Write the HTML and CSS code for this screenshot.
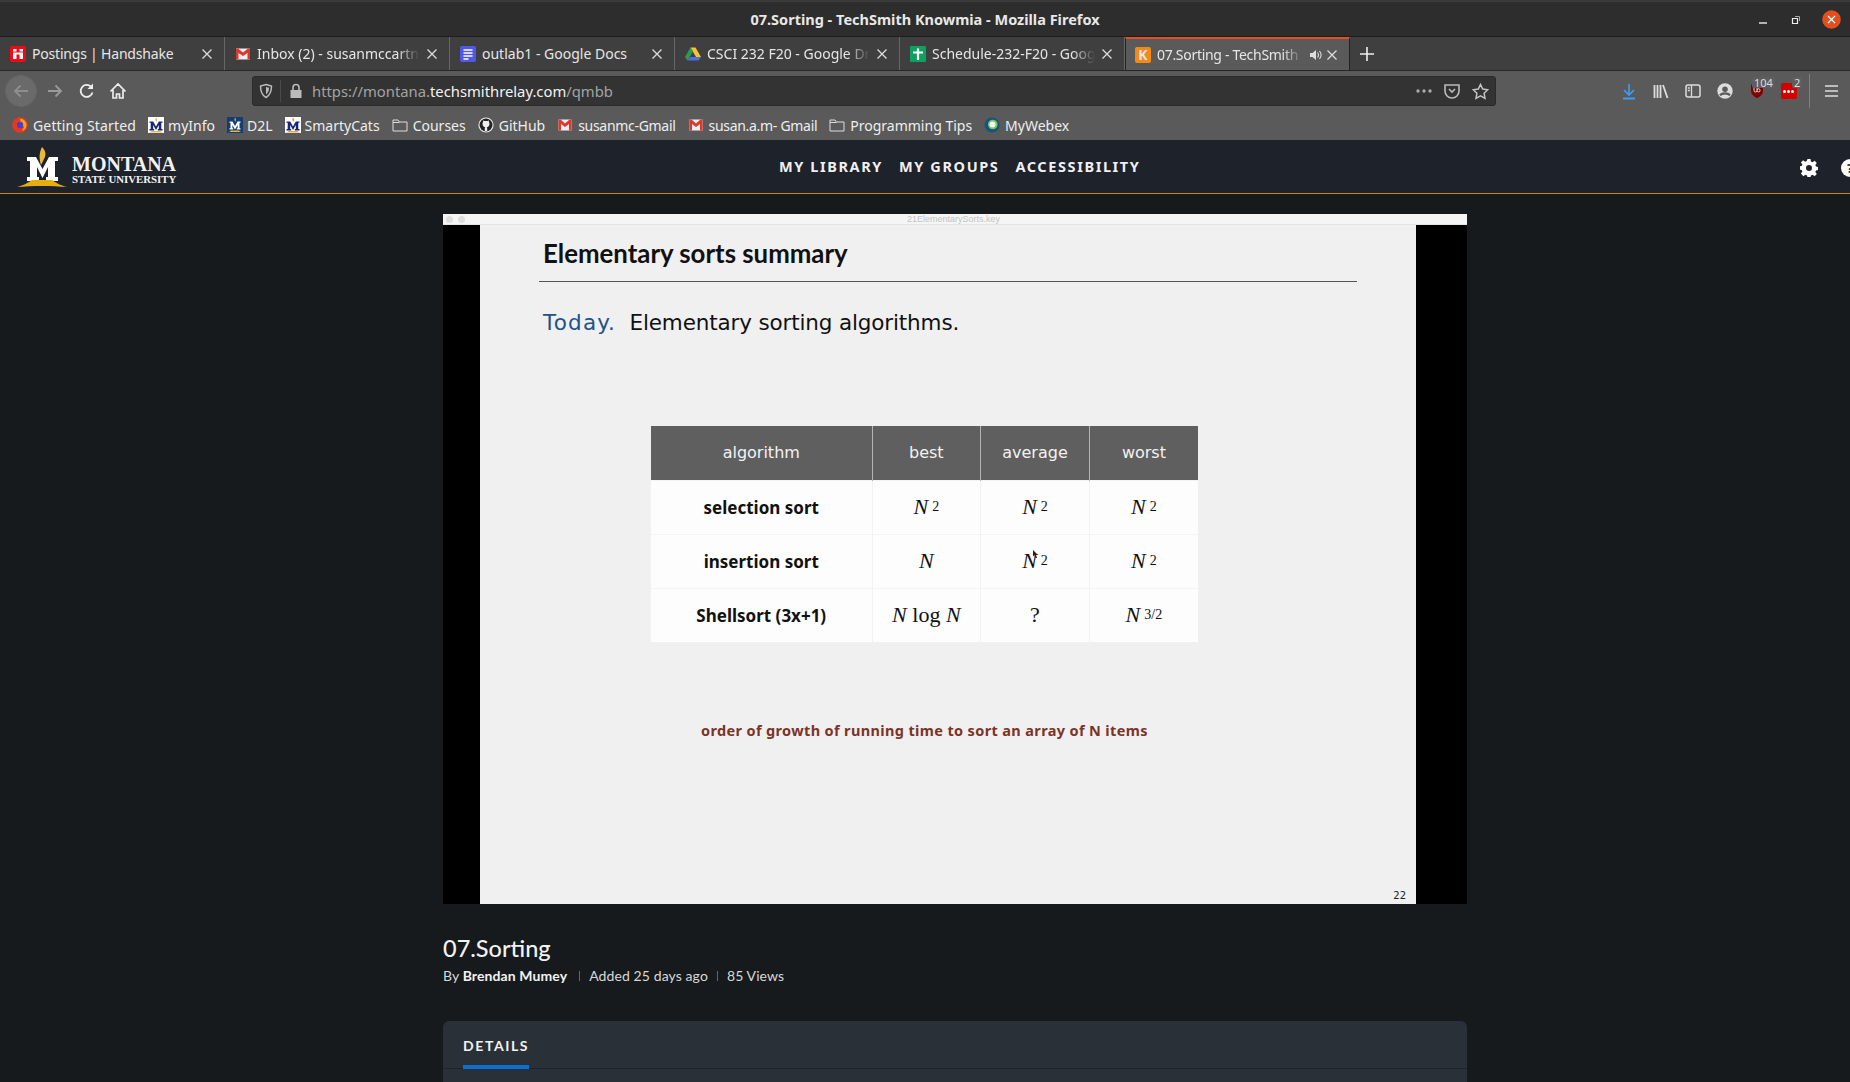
FILE: index.html
```html
<!DOCTYPE html>
<html lang="en">
<head>
    <meta charset="UTF-8">
    <meta name="viewport" content="width=device-width, initial-scale=1.0">
    <title>07.Sorting - TechSmith Knowmia</title>
    <link rel="stylesheet" href="styles.css">
</head>
<body>
    <!-- Window title -->
    <div class="titlebar">
        <span class="window-title">07.Sorting - TechSmith Knowmia - Mozilla Firefox</span>
        <div class="window-buttons">
            <svg class="win-min" width="10" height="10" viewBox="0 0 10 10"><path d="M1 8h8" stroke="#eee" stroke-width="1.4"/></svg>
            <svg class="win-max" width="10" height="10" viewBox="0 0 10 10"><path d="M1.5 3.5h5v5h-5z" fill="none" stroke="#eee" stroke-width="1.2"/><path d="M4 1.5h4.500v4.500" fill="none" stroke="#aaa"/></svg>
            <svg class="win-close" width="19" height="19" viewBox="0 0 19 19"><circle cx="9.500" cy="9.500" r="9.300" fill="#e4501c"/><path d="M6 6l7 7M13 6l-7 7" stroke="#fff" stroke-width="1.200"/></svg>
        </div>
    </div>

    <!-- Tabs -->
    <div class="tabstrip">
        <div class="tab">
            <svg class="favicon" viewBox="0 0 16 16"><rect width="16" height="16" rx="2" fill="#f00a16"/><path d="M3 3h3.500v2.500H3zM9.500 3H13v2.500H9.500zM3 6.500h10v2H3zM3 8.500h3.500V13H3zM9.500 8.500H13V13H9.500z" fill="#fff"/></svg>
            <span class="tab-label tab-label-snug">Postings | Handshake</span>
            <svg class="tab-close" width="12" height="12" viewBox="0 0 12 12"><path d="M1.500 1.500l9 9M10.500 1.500l-9 9" stroke="#ddd" stroke-width="1.300"/></svg>
        </div>
        <div class="tab">
            <svg class="favicon" viewBox="0 0 16 16"><rect x="1" y="2.500" width="14" height="11" fill="#eee"/><path d="M1 2.500h2l5 4 5-4h2v11h-2.500V7L8 10 3.500 7v6.500H1z" fill="#d93a2b"/></svg>
            <span class="tab-label tab-fade">Inbox (2) - susanmccartn</span>
            <svg class="tab-close" width="12" height="12" viewBox="0 0 12 12"><path d="M1.500 1.500l9 9M10.500 1.500l-9 9" stroke="#ddd" stroke-width="1.300"/></svg>
        </div>
        <div class="tab">
            <svg class="favicon" viewBox="0 0 16 16"><rect width="16" height="16" rx="2" fill="#5158e8"/><path d="M3.500 4h9M3.500 7h9M3.500 10h9M3.500 13h5" stroke="#fff" stroke-width="1.500"/></svg>
            <span class="tab-label">outlab1 - Google Docs</span>
            <svg class="tab-close" width="12" height="12" viewBox="0 0 12 12"><path d="M1.500 1.500l9 9M10.500 1.500l-9 9" stroke="#ddd" stroke-width="1.300"/></svg>
        </div>
        <div class="tab">
            <svg class="favicon" viewBox="0 0 16 16"><path d="M5.500 1.500h5L16 11h-5z" fill="#f6c42c"/><path d="M5.500 1.500L0 11l2.500 3.500L8 5.500z" fill="#2a9d50"/><path d="M2.500 14.500h11L16 11H5z" fill="#4d6de0"/></svg>
            <span class="tab-label tab-fade">CSCI 232 F20 - Google Dr</span>
            <svg class="tab-close" width="12" height="12" viewBox="0 0 12 12"><path d="M1.500 1.500l9 9M10.500 1.500l-9 9" stroke="#ddd" stroke-width="1.300"/></svg>
        </div>
        <div class="tab">
            <svg class="favicon" viewBox="0 0 16 16"><rect width="16" height="16" rx="1" fill="#0da05e"/><path d="M3 6.500h10M8 2.500V14" stroke="#fff" stroke-width="2.200"/></svg>
            <span class="tab-label tab-fade">Schedule-232-F20 - Goog</span>
            <svg class="tab-close" width="12" height="12" viewBox="0 0 12 12"><path d="M1.500 1.500l9 9M10.500 1.500l-9 9" stroke="#ddd" stroke-width="1.300"/></svg>
        </div>
        <div class="tab tab-active">
            <span class="favicon knowmia">K</span>
            <span class="tab-label tab-fade tab-label-tight">07.Sorting - TechSmith</span>
            <svg class="tab-sound" width="14" height="14" viewBox="0 0 14 14"><path d="M1 5h2.500L7 2v10L3.500 9H1z" fill="#ddd"/><path d="M8.500 4.500c1.200 1.500 1.200 3.500 0 5M10.500 3c2 2.500 2 5.500 0 8" fill="none" stroke="#ddd" stroke-width="1.100"/></svg>
            <svg class="tab-close" width="12" height="12" viewBox="0 0 12 12"><path d="M1.500 1.500l9 9M10.500 1.500l-9 9" stroke="#ddd" stroke-width="1.300"/></svg>
        </div>
        <svg class="new-tab" width="14" height="14" viewBox="0 0 14 14"><path d="M7 0v14M0 7h14" stroke="#eee" stroke-width="1.600"/></svg>
    </div>

    <!-- Toolbar -->
    <div class="toolbar">
        <div class="nav-buttons">
            <div class="back-btn">
                <svg width="18" height="18" viewBox="0 0 18 18"><path d="M16 9H3M8.500 3.500L3 9l5.500 5.500" fill="none" stroke="#8e8e8e" stroke-width="1.800"/></svg>
            </div>
            <svg class="nav-icon" width="18" height="18" viewBox="0 0 18 18"><path d="M2 9h13M9.500 3.500L15 9l-5.500 5.500" fill="none" stroke="#9a9a9a" stroke-width="1.800"/></svg>
            <svg class="nav-icon" width="18" height="18" viewBox="0 0 18 18"><path d="M14.500 10.500A6 6 0 1 1 13 4.700" fill="none" stroke="#eee" stroke-width="1.800"/><path d="M15 1.500v5.500H9.500z" fill="#eee"/></svg>
            <svg class="nav-icon" width="18" height="18" viewBox="0 0 18 18"><path d="M1.500 9.500L9 2l7.500 7.500M4 8v8h3.500v-4h3v4H14V8" fill="none" stroke="#eee" stroke-width="1.700"/></svg>
        </div>
        <div class="urlbar">
            <svg class="url-shield" width="16" height="16" viewBox="0 0 16 16"><path d="M8 1.500l5.500 1.500c0 5-1 9-5.500 11.500C3.500 12 2.500 8 2.500 3z" fill="none" stroke="#bbb" stroke-width="1.500"/><path d="M8 4l3 .8c0 3-.7 5-3 6.700z" fill="#bbb"/></svg>
            <span class="url-divider"></span>
            <svg class="url-lock" width="14" height="16" viewBox="0 0 14 16"><path d="M1.500 7h11v8h-11z" fill="#bbb"/><path d="M4 7V4.500a3 3 0 0 1 6 0V7" fill="none" stroke="#bbb" stroke-width="1.600"/></svg>
            <span class="url-text">https://montana.<b>techsmithrelay.com</b>/qmbb</span>
            <div class="url-actions">
                <svg width="16" height="4" viewBox="0 0 16 4"><circle cx="2" cy="2" r="1.700" fill="#aaa"/><circle cx="8" cy="2" r="1.700" fill="#aaa"/><circle cx="14" cy="2" r="1.700" fill="#aaa"/></svg>
                <svg width="16" height="16" viewBox="0 0 16 16"><path d="M1 2h14v6a7 7 0 0 1-14 0z" fill="none" stroke="#bbb" stroke-width="1.600"/><path d="M5 6l3 3 3-3" fill="none" stroke="#bbb" stroke-width="1.600"/></svg>
                <svg width="17" height="17" viewBox="0 0 17 17"><path d="M8.500 1.500l2.200 4.600 5 .7-3.600 3.500.9 5-4.500-2.400L4 15.300l.9-5L1.300 6.800l5-.7z" fill="none" stroke="#c4c4c4" stroke-width="1.500"/></svg>
            </div>
        </div>
        <div class="tool-icons">
            <svg width="16" height="17" viewBox="0 0 16 17"><path d="M8 1v10M3 7l5 5 5-5" fill="none" stroke="#3d9bf0" stroke-width="1.700"/><path d="M2 15.500h12" stroke="#3d9bf0" stroke-width="2"/></svg>
            <svg width="16" height="15" viewBox="0 0 16 15"><path d="M1.500 1v13M4.500 1v13M7.500 1v13M10 1l4.500 13" stroke="#ddd" stroke-width="1.800" fill="none"/></svg>
            <svg width="16" height="14" viewBox="0 0 16 14"><rect x="1" y="1" width="14" height="12" rx="2" fill="none" stroke="#ddd" stroke-width="1.500"/><path d="M6.500 1v12M2.800 4h2M2.800 6.500h2" stroke="#ddd" stroke-width="1.300"/></svg>
            <svg width="16" height="16" viewBox="0 0 15 15"><circle cx="7.500" cy="7.500" r="7.200" fill="#ddd"/><circle cx="7.500" cy="5.800" r="2.600" fill="#5a5a5a"/><path d="M2.800 11.500c2-2.400 7.400-2.400 9.400 0" fill="none" stroke="#5a5a5a" stroke-width="2"/></svg>
            <div class="addon">
                <svg width="14" height="16" viewBox="0 0 14 16"><path d="M1 1.500h12v6c0 3.500-2.500 6-6 7.500-3.500-1.500-6-4-6-7.500z" fill="#800000"/><path d="M4 4v3.500a1.500 1.500 0 0 0 3 0M7 4v3.500a1.500 1.500 0 0 0 3 0A1.500 1.500 0 0 0 7 7" fill="none" stroke="#ddd"/></svg>
                <span class="addon-badge">104</span>
            </div>
            <div class="addon">
                <span class="lastpass"><i></i><i></i><i></i></span>
                <span class="addon-badge">2</span>
            </div>
            <span class="tool-divider"></span>
            <svg width="13" height="12" viewBox="0 0 13 12"><path d="M0 1h13M0 6h13M0 11h13" stroke="#ddd" stroke-width="1.600"/></svg>
        </div>
    </div>

    <!-- Bookmarks -->
    <div class="bookmarks">
        <a class="bookmark bookmark-wide">
            <svg class="favicon" viewBox="0 0 16 16"><circle cx="8" cy="8" r="7.800" fill="#e8371f"/><path d="M8 1.500a6.500 6.500 0 0 1 6.500 6.500c0 3-2 5.500-4.500 6l2-4-3-3z" fill="#f7a01c"/><circle cx="8" cy="8" r="3.200" fill="#4a3fc5"/></svg>
            Getting Started
        </a>
        <a class="bookmark">
            <svg class="favicon msu-icon" viewBox="0 0 16 16"><rect width="16" height="16" fill="#fff"/><path d="M8 .5c1 1.200 1.200 2.500.3 4.500C7.400 3.500 7.200 2 8 .5z" fill="#e8a33a"/><path d="M1.500 4.500h3.700L8 9.500l2.800-5h3.700v1.300h-1.200v6.200h1.200V13.500H9.800V12h1V8L8 13 5.200 8v4h1v1.500H1.500V12h1.200V5.800H1.500z" fill="#1a2578"/><path d="M0 15.500c2-.2 3-.7 3.500-1.500h9c.5.800 1.500 1.300 3.500 1.500z" fill="#e8b93a"/></svg>
            myInfo
        </a>
        <a class="bookmark">
            <svg class="favicon msu-icon" viewBox="0 0 16 16"><rect width="16" height="16" fill="#123c72"/><path d="M8 .5c1 1.200 1.200 2.500.3 4.500C7.400 3.500 7.200 2 8 .5z" fill="#e8b93a"/><path d="M2.500 4.500h3L8 9l2.500-4.500h3v1.200h-1v5.600h1v1.200H9.800v-1.200h.8V8L8 12.500 5.400 8v3.300h.8v1.200H2.500v-1.200h1V5.700h-1z" fill="#fff"/><path d="M1 15c2-.2 2.500-.7 3-1.500h8c.5.800 1 1.300 3 1.500z" fill="#e8b93a"/></svg>
            D2L
        </a>
        <a class="bookmark">
            <svg class="favicon msu-icon" viewBox="0 0 16 16"><rect width="16" height="16" fill="#fff"/><path d="M8 .5c1 1.200 1.200 2.500.3 4.500C7.400 3.500 7.200 2 8 .5z" fill="#e8722a"/><path d="M1.500 4.500h3.700L8 9.500l2.800-5h3.700v1.300h-1.200v6.200h1.200V13.500H9.800V12h1V8L8 13 5.200 8v4h1v1.500H1.500V12h1.200V5.800H1.500z" fill="#1a2578"/><path d="M0 15.500c2-.2 3-.7 3.500-1.500h9c.5.800 1.500 1.300 3.500 1.500z" fill="#e8a33a"/></svg>
            SmartyCats
        </a>
        <a class="bookmark">
            <svg class="favicon" viewBox="0 0 16 16"><path d="M1 3h5l1.500 2H15v9H1zM1 5.500h6.500" fill="none" stroke="#ddd"/></svg>
            Courses
        </a>
        <a class="bookmark">
            <svg class="favicon" viewBox="0 0 16 16"><circle cx="8" cy="8" r="7.600" fill="#eee"/><circle cx="8" cy="8" r="6.500" fill="#222"/><path d="M4.500 7c0-1 .2-1.500.6-2l-.1-1.500 1.500.6c1-.3 2-.3 3 0l1.500-.6-.1 1.500c.4.500.6 1 .6 2 0 2-1.300 3-2.800 3.200.4.300.5.800.5 1.300V14H6.800v-2.500C6.800 11 7 10.500 7.300 10.200 5.800 10 4.500 9 4.500 7z" fill="#eee"/></svg>
            GitHub
        </a>
        <a class="bookmark bookmark-tight">
            <svg class="favicon" viewBox="0 0 16 16"><rect x="1.500" y="2.500" width="13" height="11" fill="#eee"/><path d="M1.500 2.500h2L8 6.500l4.500-4h2v11h-2.500V7L8 10 4 7v6.500H1.500z" fill="#d93a2b"/></svg>
            susanmc-Gmail
        </a>
        <a class="bookmark bookmark-tight">
            <svg class="favicon" viewBox="0 0 16 16"><rect x="1.500" y="2.500" width="13" height="11" fill="#eee"/><path d="M1.500 2.500h2L8 6.500l4.500-4h2v11h-2.500V7L8 10 4 7v6.500H1.500z" fill="#d93a2b"/></svg>
            susan.a.m- Gmail
        </a>
        <a class="bookmark">
            <svg class="favicon" viewBox="0 0 16 16"><path d="M1 3h5l1.500 2H15v9H1zM1 5.500h6.500" fill="none" stroke="#ddd"/></svg>
            Programming Tips
        </a>
        <a class="bookmark">
            <svg class="favicon" viewBox="0 0 16 16"><circle cx="8" cy="8" r="7.500" fill="#14547e"/><circle cx="8.800" cy="7.500" r="4.800" fill="#7cc65a"/><circle cx="8.500" cy="7.500" r="3" fill="#eef4ee"/></svg>
            MyWebex
        </a>
    </div>

    <!-- Site header -->
    <header class="site-header">
        <a class="logo">
            <svg class="logo-mark" width="50" height="40" viewBox="0 0 50 40">
                <path d="M25 0C28 3 30 7 27 12L24 18C22 12 22 6 25 0z" fill="#e8b93a"/>
                <path d="M10 10H19L25.500 22 32 10H41V14H38V30H41V34H29V30H31V20L25.500 31 20 20V30H22V34H10V30H13V14H10z" fill="#fff"/>
                <path d="M0 40C8 38 12 35 15 33H35C38 35 42 38 50 40 35 38.500 15 38.500 0 40z" fill="#e6ae10"/>
            </svg>
            <span class="logo-text">
                <span class="logo-name">MONTANA</span>
                <span class="logo-sub">STATE UNIVERSITY</span>
            </span>
        </a>
        <nav class="site-nav">
            <a>MY LIBRARY</a>
            <a>MY GROUPS</a>
            <a>ACCESSIBILITY</a>
        </nav>
        <div class="header-icons">
            <svg width="18" height="18" viewBox="0 0 18 18"><path d="M7.500 0h3l.4 2.500 1.700.7 2-1.500 2.200 2.200-1.500 2 .7 1.700 2.500.4v3l-2.500.4-.7 1.700 1.500 2-2.200 2.200-2-1.500-1.700.7-.4 2.500h-3l-.4-2.500-1.700-.7-2 1.500L.9 14.600l1.500-2-.7-1.700L-.8 10.500v-3l2.500-.4.7-1.700-1.500-2L3.100 1.200l2 1.500 1.700-.7zM9 6a3 3 0 1 0 0 6 3 3 0 0 0 0-6z" fill="#fff" fill-rule="evenodd"/></svg>
            <span class="help-icon">?</span>
        </div>
    </header>

    <main class="page">
        <section class="video">
            <div class="mac-bar">
                <i class="mac-dot"></i><i class="mac-dot"></i>
                <span class="mac-title">21ElementarySorts.key</span>
            </div>
            <div class="video-frame">
                <div class="slide">
                    <h1 class="slide-title">Elementary sorts summary</h1>
                    <p class="slide-lead"><span class="today">Today.</span>&nbsp; Elementary sorting algorithms.</p>
                    <table class="sort-table">
                        <thead>
                            <tr><th class="col-name">algorithm</th><th>best</th><th>average</th><th>worst</th></tr>
                        </thead>
                        <tbody>
                            <tr>
                                <td class="algo">selection sort</td>
                                <td class="math"><i>N</i><sup>2</sup></td>
                                <td class="math"><i>N</i><sup>2</sup></td>
                                <td class="math"><i>N</i><sup>2</sup></td>
                            </tr>
                            <tr>
                                <td class="algo">insertion sort</td>
                                <td class="math"><i>N</i></td>
                                <td class="math"><span class="with-cursor"><i>N</i><sup>2</sup><svg class="cursor" width="5" height="8" viewBox="0 0 5 8"><path d="M0 0l5 5H3l1 3-1.500 0L1.500 5 0 6.500z" fill="#222"/></svg></span></td>
                                <td class="math"><i>N</i><sup>2</sup></td>
                            </tr>
                            <tr>
                                <td class="algo">Shellsort (3x+1)</td>
                                <td class="math"><i>N</i> log <i>N</i></td>
                                <td class="math">?</td>
                                <td class="math"><i>N</i><sup>3/2</sup></td>
                            </tr>
                        </tbody>
                    </table>
                    <p class="slide-caption">order of growth of running time to sort an array of N items</p>
                    <span class="slide-number">22</span>
                </div>
            </div>
        </section>

        <h2 class="video-title">07.Sorting</h2>
        <p class="video-meta">By <b>Brendan Mumey</b><span class="meta-sep first"></span>Added 25 days ago<span class="meta-sep"></span>85 Views</p>

        <section class="details-card">
            <div class="card-tabs">
                <span class="card-tab">DETAILS</span>
            </div>
        </section>
    </main>
</body>
</html>
```

FILE: styles.css
```css
* {
    box-sizing: border-box;
}
html, body {
    margin: 0;
    height: 1082px;
    overflow: hidden;
}
body {
    font-family: "Noto Sans", sans-serif;
    background-color: #161a1d;
    color: #fff;
}

/* Window title */
.titlebar {
    height: 37px;
    background: #2d2d2d;
    border-top: 2px solid #3a3a3a;
    border-bottom: 1px solid #1e1e1e;
    display: flex;
    align-items: center;
    justify-content: center;
    position: relative;
}
.window-title {
    font-size: 14.500px;
    font-weight: 700;
    color: #e8e8e8;
}
.window-buttons {
    position: absolute;
    right: 9px;
    top: 8px;
    display: flex;
    align-items: center;
    gap: 21px;
}
.win-min {
    margin-right: 2px;
}

/* Tabs */
.tabstrip {
    height: 34px;
    background: #3f3f3f;
    border-bottom: 1px solid #262626;
    display: flex;
    align-items: center;
}
.tab {
    width: 225px;
    height: 33px;
    padding: 0 11px 0 10px;
    display: flex;
    align-items: center;
    gap: 6px;
    border-right: 1px solid #666;
    font-size: 14px;
    color: #e6e6e6;
}
.tab-active {
    background: #5a5a5a;
    border-top: 2px solid #e2501d;
    border-right: 1px solid #222;
    border-left: 1px solid #222;
    padding-left: 9px;
}
.favicon {
    width: 16px;
    height: 16px;
    flex: none;
}
.knowmia {
    background: #f28a1a;
    border-radius: 2px;
    font-size: 14px;
    font-weight: 700;
    line-height: 16px;
    text-align: center;
}
.tab-label {
    flex: 1;
    white-space: nowrap;
    overflow: hidden;
}
.tab-label-snug {
    letter-spacing: -0.2px;
}
.tab-label-tight {
    letter-spacing: -0.3px;
}
.tab-fade {
    -webkit-mask-image: linear-gradient(to right, #000 86%, transparent);
    mask-image: linear-gradient(to right, #000 86%, transparent);
}
.tab-close {
    flex: none;
}
.tab-sound {
    flex: none;
    margin-right: -3px;
}
.new-tab {
    margin-left: 10px;
}

/* Toolbar */
.toolbar {
    height: 35px;
    background: #5a5a5a;
    display: flex;
    align-items: flex-end;
    position: relative;
}
.nav-buttons {
    width: 252px;
    height: 30px;
    display: flex;
    align-items: center;
    padding-left: 5px;
}
.back-btn {
    width: 32px;
    height: 32px;
    border-radius: 50%;
    background: #6a6a6a;
    border: 1px solid #666;
    display: flex;
    align-items: center;
    justify-content: center;
    flex: none;
}
.nav-icon {
    margin-left: 14px;
    flex: none;
}
.nav-icon:first-of-type {
    margin-left: 9px;
}
.nav-icon:last-child {
    margin-left: 13px;
}
.urlbar {
    width: 1244px;
    height: 30px;
    background: #333;
    border: 1px solid #2a2a2a;
    border-radius: 3px;
    display: flex;
    align-items: center;
    padding-left: 5px;
    font-size: 14.800px;
    color: #a3a3a3;
    flex: none;
}
.url-divider {
    width: 1px;
    height: 22px;
    background: #4a4a4a;
    margin: 0 8px 0 6px;
}
.url-lock {
    margin-right: 9px;
}
.url-text b {
    font-weight: 400;
    color: #f2f2f2;
}
.url-actions {
    margin-left: auto;
    display: flex;
    align-items: center;
    gap: 12px;
    padding-right: 6px;
}
.tool-icons {
    flex: 1;
    height: 30px;
    display: flex;
    align-items: center;
    padding-left: 125px;
    gap: 16px;
}
.addon {
    position: relative;
    width: 16px;
    height: 16px;
    display: flex;
    justify-content: center;
}
.addon-badge {
    position: absolute;
    top: -6px;
    left: 3px;
    background: #5e5e5e;
    border-radius: 2px;
    padding: 0 2px;
    font-size: 11px;
    line-height: 11px;
    color: #ddd;
}
.addon + .addon .addon-badge {
    left: 11px;
}
.lastpass {
    width: 16px;
    height: 16px;
    background: #d40000;
    border-radius: 2px;
    display: flex;
    align-items: center;
    gap: 1px;
    padding-left: 2px;
}
.lastpass i {
    width: 3px;
    height: 3px;
    border-radius: 50%;
    background: #fff;
}
.tool-divider {
    width: 1px;
    height: 34px;
    background: #808080;
    margin: 0 -1px 0 -4px;
}

/* Bookmarks */
.bookmarks {
    height: 34px;
    background: #5a5a5a;
    display: flex;
    align-items: center;
    padding: 4px 0 0 12px;
    gap: 12px;
    font-size: 14px;
    color: #eee;
}
.bookmark {
    display: flex;
    align-items: center;
    gap: 5px;
    white-space: nowrap;
}
.bookmark-wide {
    letter-spacing: 0.16px;
}
.bookmark-tight {
    letter-spacing: -0.3px;
}
.msu-icon {
    margin-right: -1px;
}

/* Site header */
.site-header {
    height: 54px;
    background: #1e222b;
    border-bottom: 1px solid #c8832a;
    display: flex;
    align-items: flex-start;
    position: relative;
}
.logo {
    display: flex;
    align-items: flex-start;
    padding: 7px 0 0 17px;
    gap: 5px;
}
.logo-mark {
    flex: none;
}
.logo-text {
    display: flex;
    flex-direction: column;
    font-family: "Liberation Serif", serif;
    font-weight: 700;
    color: #f2f2f2;
    margin-top: 8px;
}
.logo-name {
    font-size: 20px;
    line-height: 19px;
}
.logo-sub {
    font-size: 10.800px;
    line-height: 11px;
    white-space: nowrap;
}
.site-nav {
    position: absolute;
    left: 779px;
    top: 16px;
    display: flex;
    gap: 16px;
    font-size: 14.500px;
    font-weight: 700;
    letter-spacing: 1.600px;
    color: #f0f0f0;
}
.header-icons {
    position: absolute;
    left: 1800px;
    top: 19px;
    display: flex;
    align-items: center;
    gap: 23px;
}
.help-icon {
    width: 18px;
    height: 18px;
    border-radius: 50%;
    background: #fff;
    color: #1e222b;
    font-size: 13px;
    font-weight: 700;
    line-height: 18px;
    text-align: center;
    flex: none;
}

/* Main column */
.page {
    padding-left: 443px;
    width: 1467px;
    margin-top: 20px;
}

/* Video with slide */
.video {
    height: 690px;
    display: flex;
    flex-direction: column;
}
.mac-bar {
    height: 11px;
    background: #f5f5f5;
    border-bottom: 1px solid #e4e4e4;
    display: flex;
    align-items: center;
    padding-left: 3px;
    gap: 5px;
    position: relative;
}
.mac-dot {
    width: 7px;
    height: 7px;
    border-radius: 50%;
    background: #dedede;
}
.mac-title {
    position: absolute;
    left: 464px;
    top: 0;
    font-family: "Liberation Sans", sans-serif;
    font-size: 9px;
    line-height: 10px;
    color: #c4c4c4;
}
.video-frame {
    flex: 1;
    background: #000;
    padding: 0 51px 0 37px;
    display: flex;
}
.slide {
    flex: 1;
    background: #f0f0f0;
    color: #000;
    position: relative;
    padding: 10px 0 0 59px;
}
.slide-title {
    margin: 0;
    width: 818px;
    height: 47px;
    padding-left: 4px;
    border-bottom: 1px solid #555;
    font-family: "Lato", sans-serif;
    font-size: 25.800px;
    font-weight: 700;
    line-height: 36px;
    color: #111;
}
.slide-lead {
    margin: 26px 0 0 4px;
    font-family: "DejaVu Sans", sans-serif;
    font-size: 21.500px;
    letter-spacing: -0.15px;
    line-height: 30px;
    color: #111;
}
.today {
    color: #20528c;
    letter-spacing: 1.200px;
}
.sort-table {
    margin: 88px 0 0 112px;
    border-collapse: collapse;
    table-layout: fixed;
    width: 547px;
    font-family: "DejaVu Sans", sans-serif;
    text-align: center;
}
.sort-table th {
    height: 54px;
    background: #5f5f5f;
    color: #f2f2f2;
    font-size: 16px;
    font-weight: 400;
    border-left: 1px solid #b4b4b4;
}
.sort-table th:first-child {
    border-left: none;
}
.col-name {
    width: 221px;
}
.sort-table td {
    height: 54px;
    background: #fdfdfd;
    border-left: 1px solid #f2f2f2;
    border-top: 1px solid #f4f4f4;
}
.sort-table td:first-child {
    border-left: none;
}
.sort-table .algo {
    font-family: "Noto Sans", sans-serif;
    font-size: 17px;
    font-weight: 700;
    color: #111;
}
.math {
    font-family: "Liberation Serif", serif;
    font-size: 22px;
    color: #111;
}
.math sup {
    font-size: 14px;
    line-height: 0;
    margin-left: 4px;
    vertical-align: 3px;
}
.with-cursor {
    position: relative;
}
.cursor {
    position: absolute;
    left: 11px;
    top: 2px;
}
.slide-caption {
    margin: 78px 0 0 162px;
    font-family: "Noto Sans", sans-serif;
    font-size: 14.500px;
    font-weight: 700;
    letter-spacing: 0.36px;
    line-height: 20px;
    color: #7c3328;
    white-space: nowrap;
}
.slide-number {
    position: absolute;
    right: 10px;
    bottom: 3px;
    font-family: "DejaVu Sans", sans-serif;
    font-size: 10px;
    color: #222;
}

/* Title and meta */
.video-title {
    margin: 30px 0 0;
    font-family: "Lato", sans-serif;
    font-size: 23.500px;
    font-weight: 500;
    line-height: 28px;
    color: #f2f2f2;
}
.video-meta {
    margin: 5px 0 0;
    font-family: "Lato", sans-serif;
    font-size: 14px;
    letter-spacing: 0.1px;
    line-height: 18px;
    color: #d8d8d8;
}
.video-meta b {
    font-weight: 700;
    color: #f2f2f2;
}
.meta-sep {
    display: inline-block;
    width: 1px;
    height: 10px;
    background: #666;
    margin: 0 9px;
}
.meta-sep.first {
    margin-left: 12px;
}

/* Details card */
.details-card {
    margin-top: 36px;
    height: 61px;
    background: #2a3038;
    border-radius: 6px 6px 0 0;
}
.card-tabs {
    height: 48px;
    padding: 13px 0 0 20px;
    border-bottom: 1px solid #1e222b;
}
.card-tab {
    display: inline-block;
    height: 34px;
    border-bottom: 4px solid #0a6fd0;
    font-family: "Lato", sans-serif;
    font-size: 14px;
    font-weight: 700;
    letter-spacing: 1.600px;
    line-height: 22px;
    color: #f2f2f2;
}
```
